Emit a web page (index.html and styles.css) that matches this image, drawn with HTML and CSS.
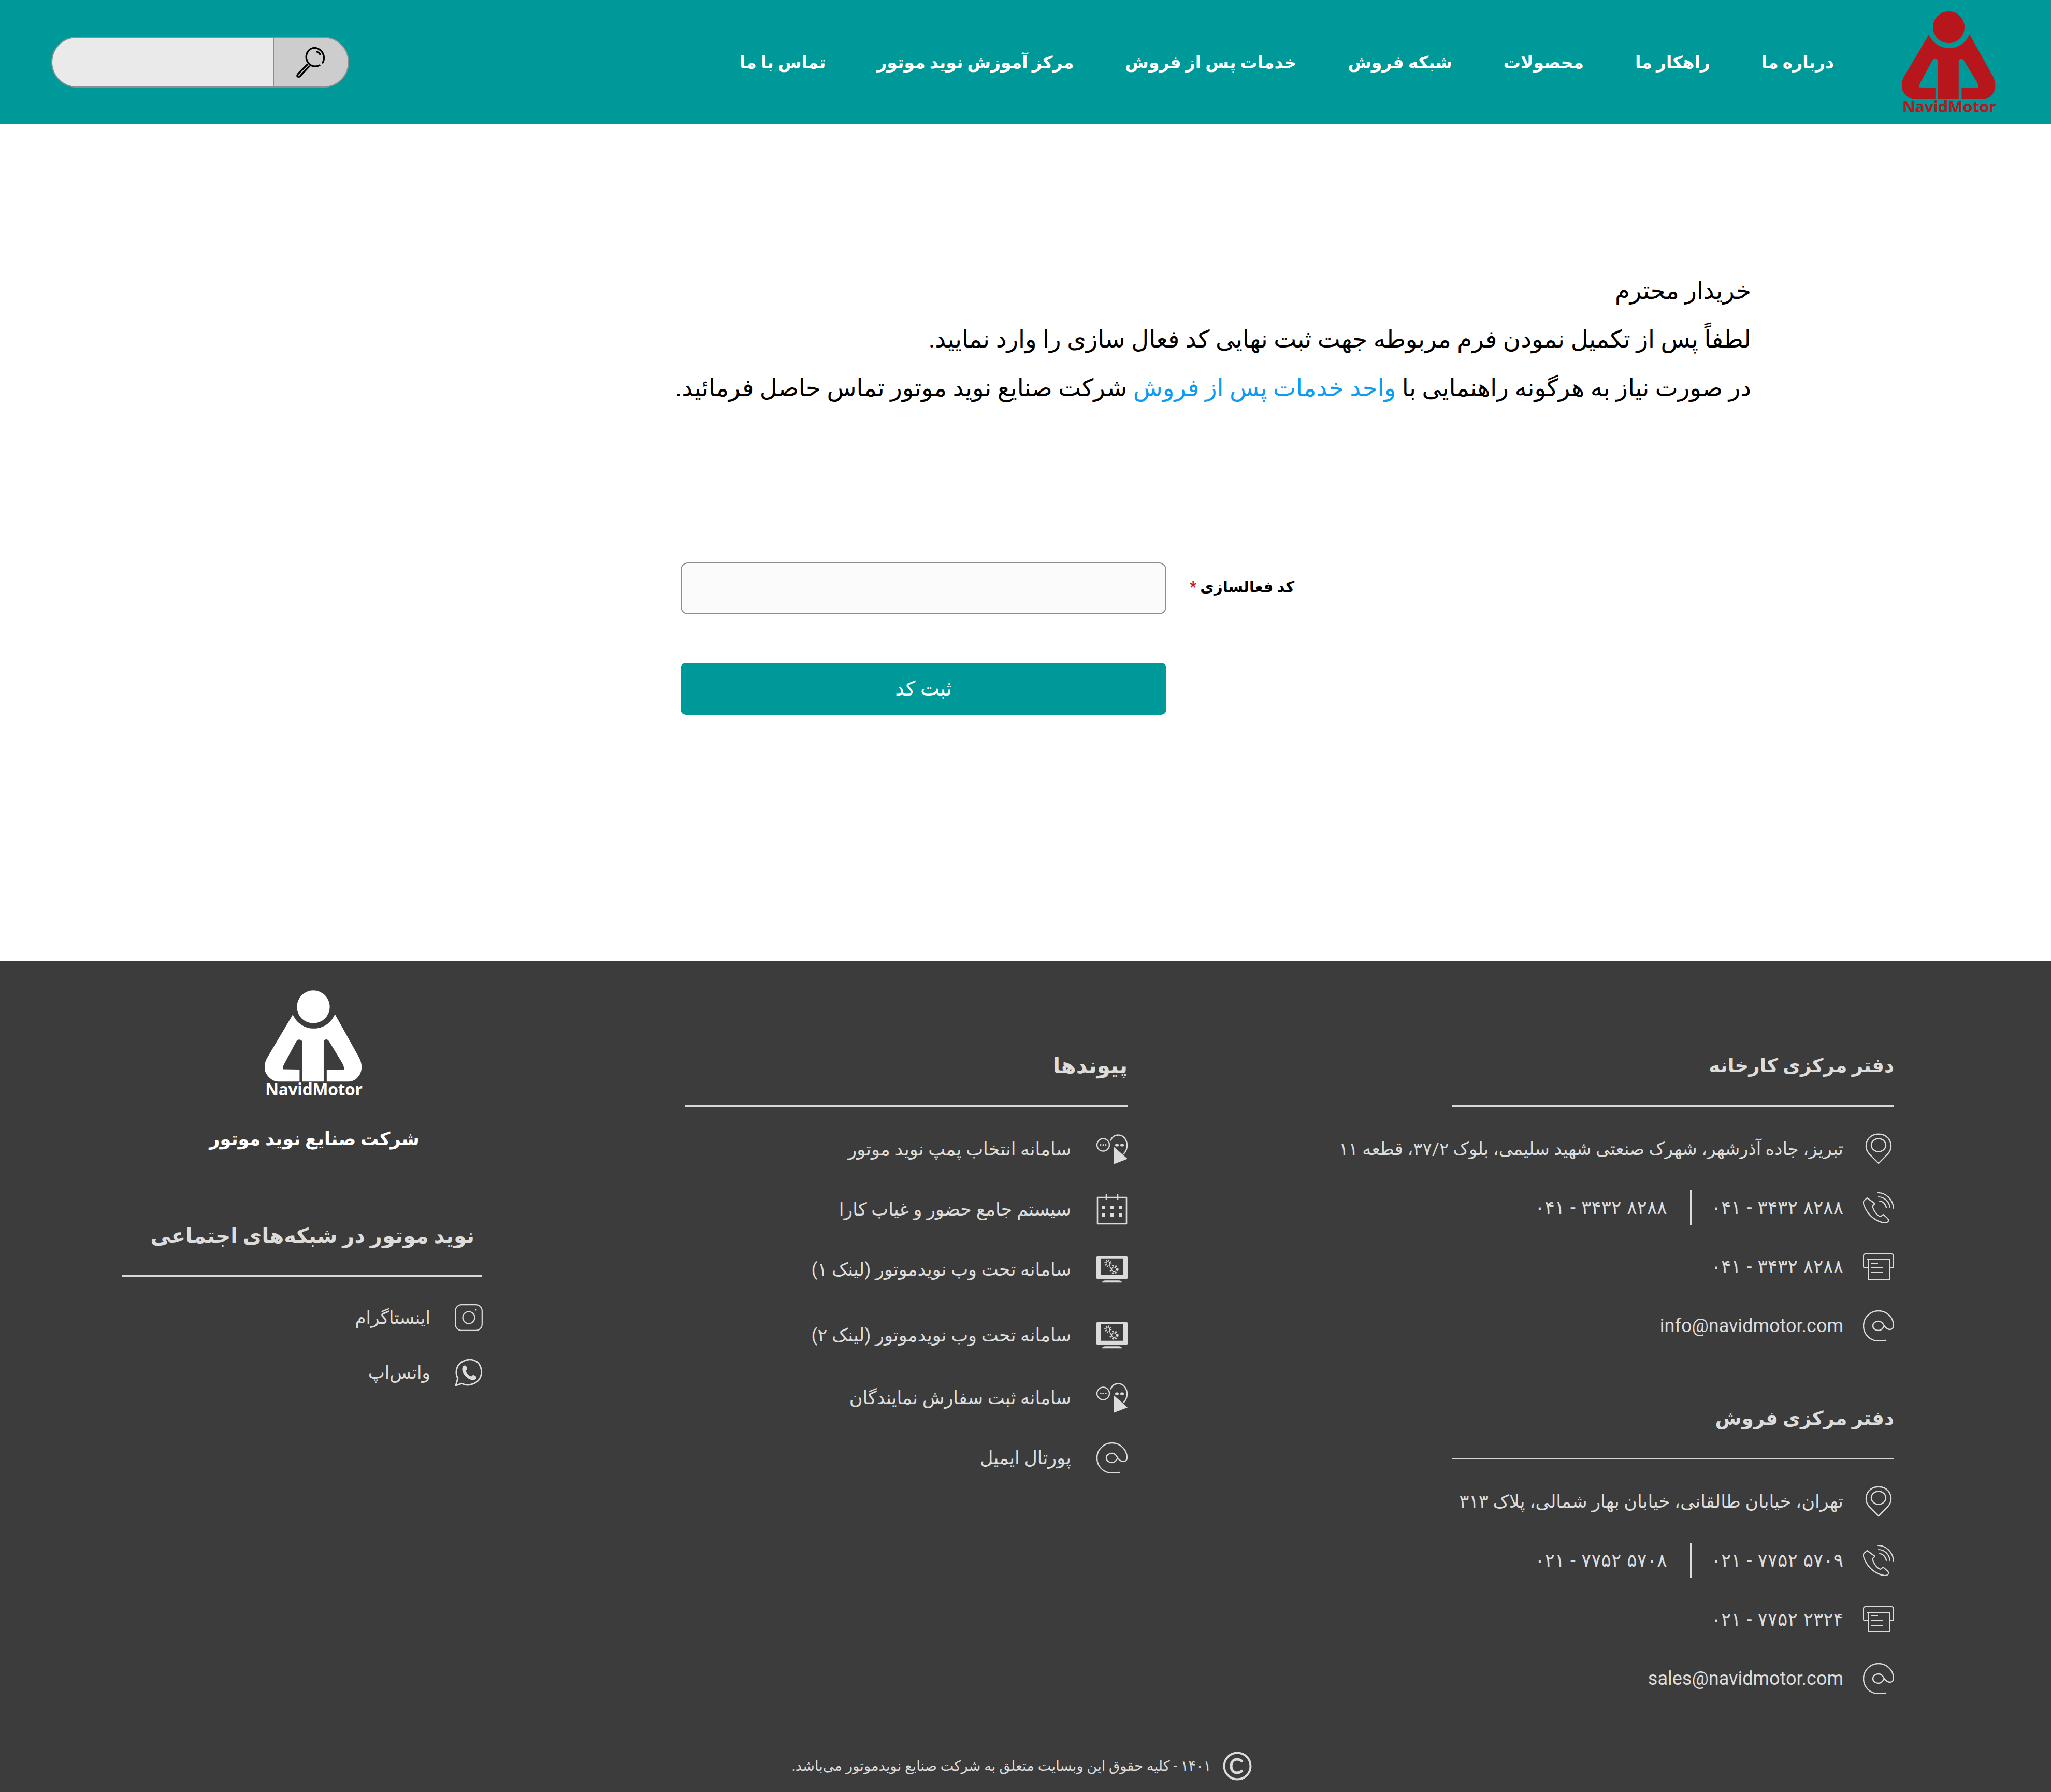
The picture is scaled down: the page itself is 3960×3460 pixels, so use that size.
FILE: index.html
```html
<!DOCTYPE html>
<html lang="fa" dir="rtl">
<head>
    <meta charset="utf-8">
    <title>نوید موتور</title>
    <link rel="stylesheet" href="styles.css">
</head>
<body>
    <svg class="sprite" width="0" height="0">
        <defs>
            <g id="logo-mark">
                <circle cx="787" cy="157" r="92"/>
                <path d="M672 200 C695 250 740 278 790 278 C840 278 885 250 908 198 L1040 435 C1060 470 1062 500 1050 530 C1035 560 1010 575 985 575 L862 575 L862 510 L960 510 C960 495 955 480 945 465 L875 350 C865 335 850 338 845 350 L845 575 L725 575 L725 352 C720 338 700 335 692 350 L622 480 C617 490 615 500 618 506 L710 508 L710 575 L590 575 C560 575 530 550 518 520 C510 490 515 465 530 440 Z"/>
            </g>
        </defs>
        <symbol id="i-search" viewBox="0 0 62 60">
            <path d="M47 36 C42 39 35 39 30 36 C22 31 19 20 23 12 C27 4 36 0 44 4 C53 8 58 19 54 29 L53 31" fill="none" stroke="currentColor" stroke-width="3.4" stroke-linecap="round"/>
            <path d="M42 10 C45 11 47 13 48 15" fill="none" stroke="currentColor" stroke-width="3.4" stroke-linecap="round"/>
            <path d="M23 35 L7 51 C3 55 3 58 6 58 C8 59 10 57 12 54 L27 38" fill="none" stroke="currentColor" stroke-width="3.4" stroke-linecap="round" stroke-linejoin="round"/>
        </symbol>
        <symbol id="i-pin" viewBox="0 0 60 60">
            <path d="M30 58 L13 41 C4 32 4 19 11 10 C20 -1 40 -1 49 10 C56 19 56 32 47 41 Z" fill="none" stroke="currentColor" stroke-width="2.4"/>
            <ellipse cx="30" cy="23" rx="14" ry="12.5" fill="none" stroke="currentColor" stroke-width="2.4"/>
        </symbol>
        <symbol id="i-phone" viewBox="0 0 60 60">
            <path d="M8 11 L2 16 C0 19 1 25 5 32 C12 46 26 57 42 59 C46 59 49 57 50 54 L47 50 L39 43 L34 47 C28 46 21 37 18 27 L23 22 Z" fill="none" stroke="currentColor" stroke-width="2.2" stroke-linejoin="round"/>
            <path d="M29 1 C44 1 58 14 59 31 M30 9 C41 9 51 18 52 30 M32 17 C38 17 44 23 45 30" fill="none" stroke="currentColor" stroke-width="2.2" stroke-linecap="round"/>
        </symbol>
        <symbol id="i-fax" viewBox="0 0 60 52">
            <path d="M10 28 L3 28 C2 28 1 27 1 25 L1 5 C1 2 3 1 5 1 L55 1 C57 1 59 2 59 5 L59 25 C59 27 58 28 57 28 L51 28" fill="none" stroke="currentColor" stroke-width="2"/>
            <path d="M7 12 L53 12 M10 12 L10 50 L51 50 L51 12" fill="none" stroke="currentColor" stroke-width="2"/>
            <path d="M16 19 L29 19 M16 28 L38 28 M16 37 L38 37" fill="none" stroke="currentColor" stroke-width="2"/>
        </symbol>
        <symbol id="i-at" viewBox="0 0 60 60">
            <path d="M44 58 C40 59 35 59 30 59 C13 59 1 46 1 30 C1 14 14 1 30 1 C46 1 59 14 59 30 C59 34 56 37 52 37 C47 37 44 34 41 30 C38 24 34 21 30 21 C24 21 19 25 19 30 C19 35 24 39 30 39 C34 39 38 36 41 30" fill="none" stroke="currentColor" stroke-width="2.4" stroke-linecap="round"/>
        </symbol>
        <symbol id="i-chat" viewBox="0 0 60 57">
            <circle cx="13" cy="20" r="12" fill="none" stroke="currentColor" stroke-width="2.4"/>
            <circle cx="8" cy="20" r="1.6"/><circle cx="13" cy="20" r="1.6"/><circle cx="18" cy="20" r="1.6"/>
            <path d="M27 12 C30 4 36 1 42 1 C52 1 59 10 59 21 C59 29 56 34 52 38" fill="none" stroke="currentColor" stroke-width="2.4"/>
            <rect x="36" y="18" width="7" height="5" rx="2.5"/><rect x="46" y="18" width="7" height="5" rx="2.5"/>
            <path d="M34 24 L60 47 L34 57 Z"/>
        </symbol>
        <symbol id="i-calendar" viewBox="0 0 60 60">
            <path d="M2 7 L58 7 L58 58 L2 58 Z" fill="none" stroke="currentColor" stroke-width="2.6" stroke-linejoin="round"/>
            <path d="M19 1 L19 12 M41 1 L41 12" stroke="currentColor" stroke-width="2.6"/>
            <rect x="11" y="24" width="6" height="6"/><rect x="27" y="24" width="6" height="6"/><rect x="43" y="24" width="6" height="6"/>
            <rect x="11" y="38" width="6" height="6"/><rect x="27" y="38" width="6" height="6"/><rect x="43" y="38" width="6" height="6"/>
        </symbol>
        <symbol id="i-monitor" viewBox="0 0 62 52">
            <path d="M2 0 L60 0 C61 0 62 1 62 2 L62 43 C62 44 61 45 60 45 L2 45 C1 45 0 44 0 43 L0 2 C0 1 1 0 2 0 Z M9 4 L9 37 L53 37 L53 4 Z" fill-rule="evenodd"/>
            <path d="M11 52 C12 49 14 48 18 48 L44 48 C48 48 50 49 51 52 Z"/>
            <circle cx="23" cy="14" r="6" fill="none" stroke="currentColor" stroke-width="2.6" stroke-dasharray="2 2.7"/>
            <circle cx="23" cy="14" r="3.6" fill="#3c3c3c" stroke="currentColor" stroke-width="1.2"/>
            <circle cx="35" cy="26" r="7.5" fill="none" stroke="currentColor" stroke-width="3" stroke-dasharray="3 3.3"/>
            <circle cx="35" cy="26" r="4.6" fill="#3c3c3c" stroke="currentColor" stroke-width="1.6"/>
        </symbol>
        <symbol id="i-instagram" viewBox="0 0 54 52">
            <rect x="1.2" y="1.2" width="51.6" height="49.6" rx="12" fill="none" stroke="currentColor" stroke-width="2.2"/>
            <circle cx="27" cy="26" r="11.5" fill="none" stroke="currentColor" stroke-width="2.2"/>
            <circle cx="41" cy="11" r="1.6"/>
        </symbol>
        <symbol id="i-whatsapp" viewBox="0 0 56 56">
            <path d="M2 54 L6 40 C-1 26 5 10 18 5 C32 -2 48 4 52 18 C57 32 50 46 36 51 C28 54 20 53 14 50 Z" fill="none" stroke="currentColor" stroke-width="3"/>
            <path d="M20 14 C22 14 23 15 24 18 C25 21 25 22 23 24 C22 25 22 26 24 29 C27 33 30 35 33 36 C35 35 36 33 37 33 C39 33 43 36 43 37 C44 40 41 43 37 43 C29 44 15 32 15 22 C15 17 17 14 20 14 Z"/>
        </symbol>
        <symbol id="i-copyright" viewBox="0 0 56 56">
            <circle cx="28" cy="28" r="25.5" fill="none" stroke="currentColor" stroke-width="4"/>
            <path d="M38 20 C35 16 31 15 27 15 C20 15 16 21 16 28 C16 35 20 41 27 41 C31 41 35 40 38 36" fill="none" stroke="currentColor" stroke-width="5"/>
        </symbol>
    </svg>

    <header class="top-bar">
        <a class="brand" href="#">
            <svg class="brand-logo" viewBox="500 50 580 640"><use href="#logo-mark"/><text x="518" y="652" textLength="544" direction="ltr" class="logo-text">NavidMotor</text></svg>
        </a>
        <nav class="main-nav">
            <a href="#">درباره ما</a>
            <a href="#">راهکار ما</a>
            <a href="#">محصولات</a>
            <a href="#">شبکه فروش</a>
            <a href="#">خدمات پس از فروش</a>
            <a href="#">مرکز آموزش نوید موتور</a>
            <a href="#">تماس با ما</a>
        </nav>
        <form class="search">
            <button class="search-btn" type="button"><svg class="search-icon"><use href="#i-search"/></svg></button>
            <input class="search-input" type="text">
        </form>
    </header>

    <main class="content">
        <div class="notice">
            <p>خریدار محترم</p>
            <p>لطفاً پس از تکمیل نمودن فرم مربوطه جهت ثبت نهایی کد فعال سازی را وارد نمایید.</p>
            <p>در صورت نیاز به هرگونه راهنمایی با <a href="#">واحد خدمات پس از فروش</a> شرکت صنایع نوید موتور تماس حاصل فرمائید.</p>
        </div>
        <form class="code-form">
            <label class="code-label" for="code">کد فعالسازی <span class="required">*</span></label>
            <input class="code-input" id="code" type="text">
            <button class="code-submit" type="button">ثبت کد</button>
        </form>
    </main>

    <footer class="site-footer">
        <div class="footer-cols">
            <section class="footer-col col-offices">
                <h3 class="col-title">دفتر مرکزی کارخانه</h3>
                <ul class="info-list">
                    <li><svg class="ico"><use href="#i-pin"/></svg><span class="addr-long">تبریز، جاده آذرشهر، شهرک صنعتی شهید سلیمی، بلوک ۳۷/۲، قطعه ۱۱</span></li>
                    <li><svg class="ico"><use href="#i-phone"/></svg><span class="num" dir="ltr">۰۴۱ - ۳۴۳۲ ۸۲۸۸</span><span class="num second" dir="ltr">۰۴۱ - ۳۴۳۲ ۸۲۸۸</span></li>
                    <li><svg class="ico"><use href="#i-fax"/></svg><span class="num" dir="ltr">۰۴۱ - ۳۴۳۲ ۸۲۸۸</span></li>
                    <li><svg class="ico"><use href="#i-at"/></svg><span class="mail" dir="ltr">info@navidmotor.com</span></li>
                </ul>
                <h3 class="col-title title-next">دفتر مرکزی فروش</h3>
                <ul class="info-list">
                    <li><svg class="ico"><use href="#i-pin"/></svg><span>تهران، خیابان طالقانی، خیابان بهار شمالی، پلاک ۳۱۳</span></li>
                    <li><svg class="ico"><use href="#i-phone"/></svg><span class="num" dir="ltr">۰۲۱ - ۷۷۵۲ ۵۷۰۹</span><span class="num second" dir="ltr">۰۲۱ - ۷۷۵۲ ۵۷۰۸</span></li>
                    <li><svg class="ico"><use href="#i-fax"/></svg><span class="num" dir="ltr">۰۲۱ - ۷۷۵۲ ۲۳۲۴</span></li>
                    <li><svg class="ico"><use href="#i-at"/></svg><span class="mail" dir="ltr">sales@navidmotor.com</span></li>
                </ul>
            </section>

            <section class="footer-col col-links">
                <h3 class="col-title">پیوندها</h3>
                <ul class="info-list">
                    <li><svg class="ico"><use href="#i-chat"/></svg><a href="#">سامانه انتخاب پمپ نوید موتور</a></li>
                    <li><svg class="ico"><use href="#i-calendar"/></svg><a href="#">سیستم جامع حضور و غیاب کارا</a></li>
                    <li><svg class="ico"><use href="#i-monitor"/></svg><a href="#">سامانه تحت وب نویدموتور (لینک ۱)</a></li>
                    <li class="row-wide"><svg class="ico"><use href="#i-monitor"/></svg><a href="#">سامانه تحت وب نویدموتور (لینک ۲)</a></li>
                    <li><svg class="ico"><use href="#i-chat"/></svg><a href="#">سامانه ثبت سفارش نمایندگان</a></li>
                    <li><svg class="ico"><use href="#i-at"/></svg><a href="#">پورتال ایمیل</a></li>
                </ul>
            </section>

            <section class="footer-col col-brand">
                <svg class="footer-logo" viewBox="500 50 580 640"><use href="#logo-mark"/><text x="518" y="652" textLength="544" direction="ltr" class="logo-text">NavidMotor</text></svg>
                <div class="company">شرکت صنایع نوید موتور</div>
                <h3 class="col-title social-title">نوید موتور در شبکه‌های اجتماعی</h3>
                <ul class="info-list social-list">
                    <li><svg class="ico"><use href="#i-instagram"/></svg><a href="#">اینستاگرام</a></li>
                    <li><svg class="ico"><use href="#i-whatsapp"/></svg><a href="#">واتس‌اپ</a></li>
                </ul>
            </section>
        </div>
        <div class="copyright">
            <svg class="copy-icon"><use href="#i-copyright"/></svg>
            <span>۱۴۰۱ - کلیه حقوق این وبسایت متعلق به شرکت صنایع نویدموتور می‌باشد.</span>
        </div>
    </footer>
</body>
</html>
```

FILE: styles.css
```css
* {
    box-sizing: border-box;
}

body {
    margin: 0;
    font-family: Roboto, "DejaVu Sans", sans-serif;
    color: #000;
    background-color: #fff;
}

a {
    color: inherit;
    text-decoration: none;
}

ul {
    list-style: none;
    margin: 0;
    padding: 0;
}

.sprite {
    position: absolute;
}

.logo-text {
    font-family: "Open Sans", sans-serif;
    font-size: 92px;
    font-weight: 700;
}

/* header */
.top-bar {
    display: flex;
    align-items: center;
    height: 240px;
    padding: 0 100px 0 99px;
    background-color: #009999;
    color: #fff;
}

.brand {
    display: block;
    height: 213px;
    margin-top: 7px;
}

.brand-logo {
    width: 193px;
    height: 213px;
    color: #b7171c;
    fill: #b7171c;
}

.main-nav {
    display: flex;
    gap: 99px;
    margin-right: 126px;
    font-size: 33px;
    font-weight: 700;
    white-space: nowrap;
}

.search {
    display: flex;
    width: 575px;
    height: 98px;
    margin-right: auto;
    border: 2px solid #8e8e8e;
    border-radius: 49px;
    overflow: hidden;
}

.search-btn {
    flex: 0 0 145px;
    padding: 0;
    border: none;
    border-left: 2px solid #8e8e8e;
    background-color: #cdcdcd;
    color: #000;
}

.search-icon {
    display: block;
    width: 62px;
    height: 60px;
    margin: 0 auto;
}

.search-input {
    flex: 1;
    min-width: 0;
    border: none;
    background-color: #eaeaea;
}

/* activation form */
.content {
    height: 1616px;
    padding-top: 274px;
}

.notice {
    margin-right: 579px;
    font-size: 46.7px;
    line-height: 94px;
}

.notice p {
    margin: 0;
}

.notice a {
    color: #0d9cf2;
}

.code-form {
    display: grid;
    grid-template-columns: 247px 938px;
    row-gap: 94px;
    align-items: center;
    margin: 290px 1461px 0 0;
}

.code-label {
    font-size: 29px;
    font-weight: 700;
    padding-bottom: 6px;
}

.required {
    color: #c4161c;
}

.code-input {
    grid-column: 2;
    height: 100px;
    border: 2px solid #8e8e8e;
    border-radius: 14px;
    background-color: #fbfbfb;
}

.code-submit {
    grid-column: 2;
    height: 100px;
    border: none;
    border-radius: 10px;
    background-color: #009999;
    color: #fff;
    font: inherit;
    font-size: 39px;
}

/* footer */
.site-footer {
    height: 1604px;
    padding-top: 57px;
    background-color: #3c3c3c;
    color: #dcdcdc;
}

.footer-cols {
    display: grid;
    grid-template-columns: 1480px 1247px 694px;
    height: 1409px;
    padding: 0 303px 0 236px;
}

.col-offices,
.col-links {
    padding-top: 105px;
}

.col-title {
    width: 854px;
    margin: 0;
    padding-bottom: 36px;
    border-bottom: 3px solid #d8d8d8;
    font-size: 37px;
    font-weight: 700;
    line-height: 80px;
    white-space: nowrap;
}

.col-links .col-title {
    font-size: 42px;
}

.title-next {
    margin-top: 82px;
}

.info-list {
    margin-top: 24px;
    font-size: 35px;
}

.info-list li {
    display: flex;
    align-items: center;
    gap: 38px;
    height: 114px;
    white-space: nowrap;
}

.col-links .info-list li {
    height: 116px;
    gap: 49px;
}

.col-links .info-list .row-wide {
    height: 126px;
    margin-top: 6px;
}

.ico {
    flex: 0 0 60px;
    width: 60px;
    height: 60px;
    color: #dcdcdc;
    fill: #dcdcdc;
}

.addr-long {
    font-size: 34px;
}

.num {
    font-size: 36px;
    word-spacing: 2px;
}

.mail {
    font-size: 36px;
}

.second {
    padding-right: 44px;
    border-right: 3px solid #dcdcdc;
    line-height: 68px;
}

.col-brand {
    display: flex;
    flex-direction: column;
    margin-top: -6px;
}

.footer-logo {
    width: 200px;
    height: 221px;
    margin-right: 224px;
    color: #fff;
    fill: #fff;
}

.company {
    margin-top: 32px;
    padding-left: 48px;
    color: #fff;
    font-size: 35px;
    font-weight: 700;
    line-height: 80px;
    text-align: center;
}

.col-brand .social-title {
    width: auto;
    margin-top: 107px;
    padding-right: 14px;
    padding-bottom: 35px;
    font-size: 40px;
}

.social-list {
    margin-top: 26px;
    font-size: 34px;
}

.social-list li {
    height: 106px;
    gap: 47px;
}

.social-list .ico {
    flex-basis: 54px;
    width: 54px;
    height: 54px;
    margin-right: -2px;
}

.copyright {
    display: flex;
    align-items: center;
    justify-content: center;
    gap: 23px;
    height: 60px;
    margin-top: 58px;
    padding-right: 14px;
    font-size: 27.3px;
}

.copy-icon {
    width: 56px;
    height: 56px;
    color: #dcdcdc;
    fill: #dcdcdc;
}
```
